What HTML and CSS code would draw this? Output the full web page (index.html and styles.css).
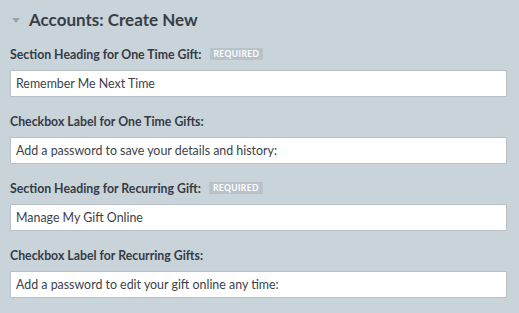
FILE: index.html
```html
<!DOCTYPE html>
<html>
<head>
<meta charset="utf-8">
<link rel="stylesheet" href="styles.css">
</head>
<body>
<div class="panel">
  <div class="panel-header">
    <svg class="caret" width="8" height="5" viewBox="0 0 8 5"><polygon points="0,0 8,0 4,5" fill="#9aa5ae"/></svg>
    <h2 class="title">Accounts: Create New</h2>
  </div>
  <div class="field">
    <label class="field-label">Section Heading for One Time Gift: <span class="badge">REQUIRED</span></label>
    <div class="input">Remember Me Next Time</div>
  </div>
  <div class="field">
    <label class="field-label">Checkbox Label for One Time Gifts:</label>
    <div class="input">Add a password to save your details and history:</div>
  </div>
  <div class="field">
    <label class="field-label">Section Heading for Recurring Gift: <span class="badge">REQUIRED</span></label>
    <div class="input">Manage My Gift Online</div>
  </div>
  <div class="field">
    <label class="field-label">Checkbox Label for Recurring Gifts:</label>
    <div class="input">Add a password to edit your gift online any time:</div>
  </div>
</div>
</body>
</html>
```
FILE: styles.css
```css
html, body {
  margin: 0;
  padding: 0;
  background: #c9d3da;
}
body {
  font-family: Lato, "Noto Sans", sans-serif;
  color: #343c45;
}
.panel {
  padding: 10px 12px 0 10px;
}
.panel-header {
  display: flex;
  align-items: center;
  height: 20px;
  margin-bottom: 16px;
}
.caret {
  margin-left: 2px;
  margin-right: 9px;
  display: block;
}
.title {
  margin: 0;
  font-size: 17px;
  line-height: 20px;
  font-weight: 700;
  color: #363e47;
}
.field {
  margin-bottom: 16px;
}
.field-label {
  display: flex;
  align-items: center;
  height: 16px;
  font-size: 12.3px;
  font-weight: 700;
  margin-bottom: 8px;
}
.badge {
  margin-left: 8px;
  background: #b7c2ca;
  color: #fff;
  font-size: 8.5px;
  font-weight: 700;
  letter-spacing: 0.4px;
  padding: 0 4px;
  height: 12px;
  line-height: 12px;
  border-radius: 1px;
}
.input {
  height: 25px;
  line-height: 25px;
  background: #fff;
  border: 1px solid #b8c1c8;
  padding: 0 5px;
  font-size: 12.4px;
  color: #3b4249;
}
```
